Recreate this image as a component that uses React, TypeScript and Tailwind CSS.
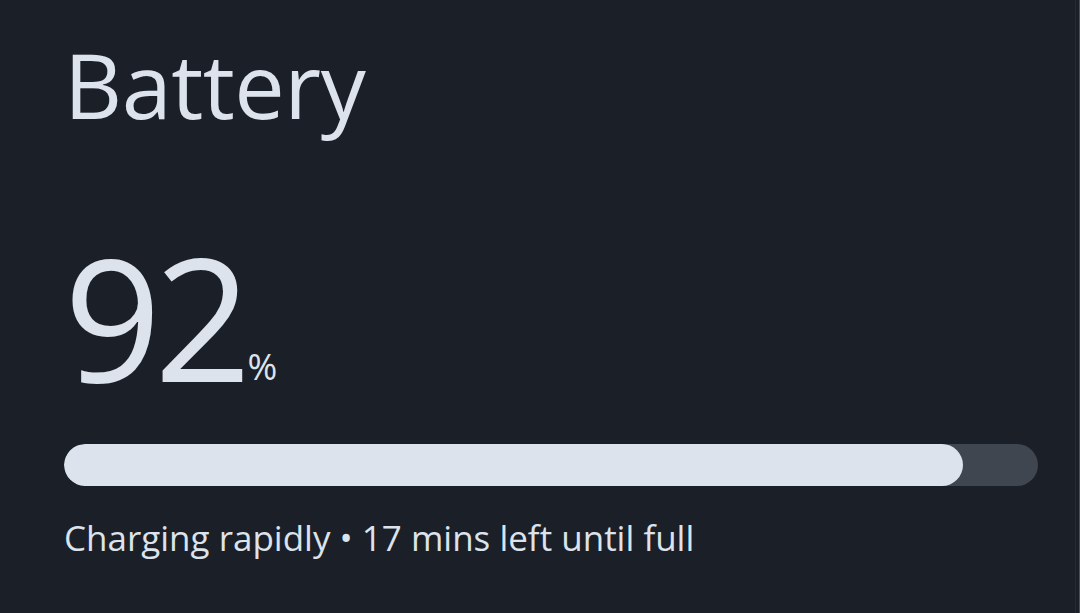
export default function App() {
  const pct = 92.3;
  return (
    <div className="w-[1080px] h-[613px] bg-[#1b1f27] overflow-hidden flex">
      <div className="flex-1 flex flex-col pl-[64px] text-[#dce3ec] font-['Open_Sans',sans-serif]">
        <div className="mt-[39px] text-[90px] leading-none tracking-[-0.5px]">Battery</div>
        <div className="mt-[102px] flex items-baseline">
          <span className="text-[170px] leading-none tracking-[-7px]">92</span>
          <span className="text-[36px] leading-none ml-[3px] relative top-[-2px]">%</span>
        </div>
        <div className="mt-[43px] h-[42px] w-[974px] rounded-full bg-[#3f4650] overflow-hidden">
          <div className="h-full rounded-full bg-[#dce3ec]" style={{ width: `${pct}%` }} />
        </div>
        <div className="mt-[34px] text-[35px] leading-none">Charging rapidly • 17 mins left until full</div>
      </div>
      <div className="w-[1px] bg-[#262b33]" />
      <div className="w-[3px] bg-[#1b1f27]" />
      <div className="w-[1px] bg-[#4a505a]" />
    </div>
  );
}
